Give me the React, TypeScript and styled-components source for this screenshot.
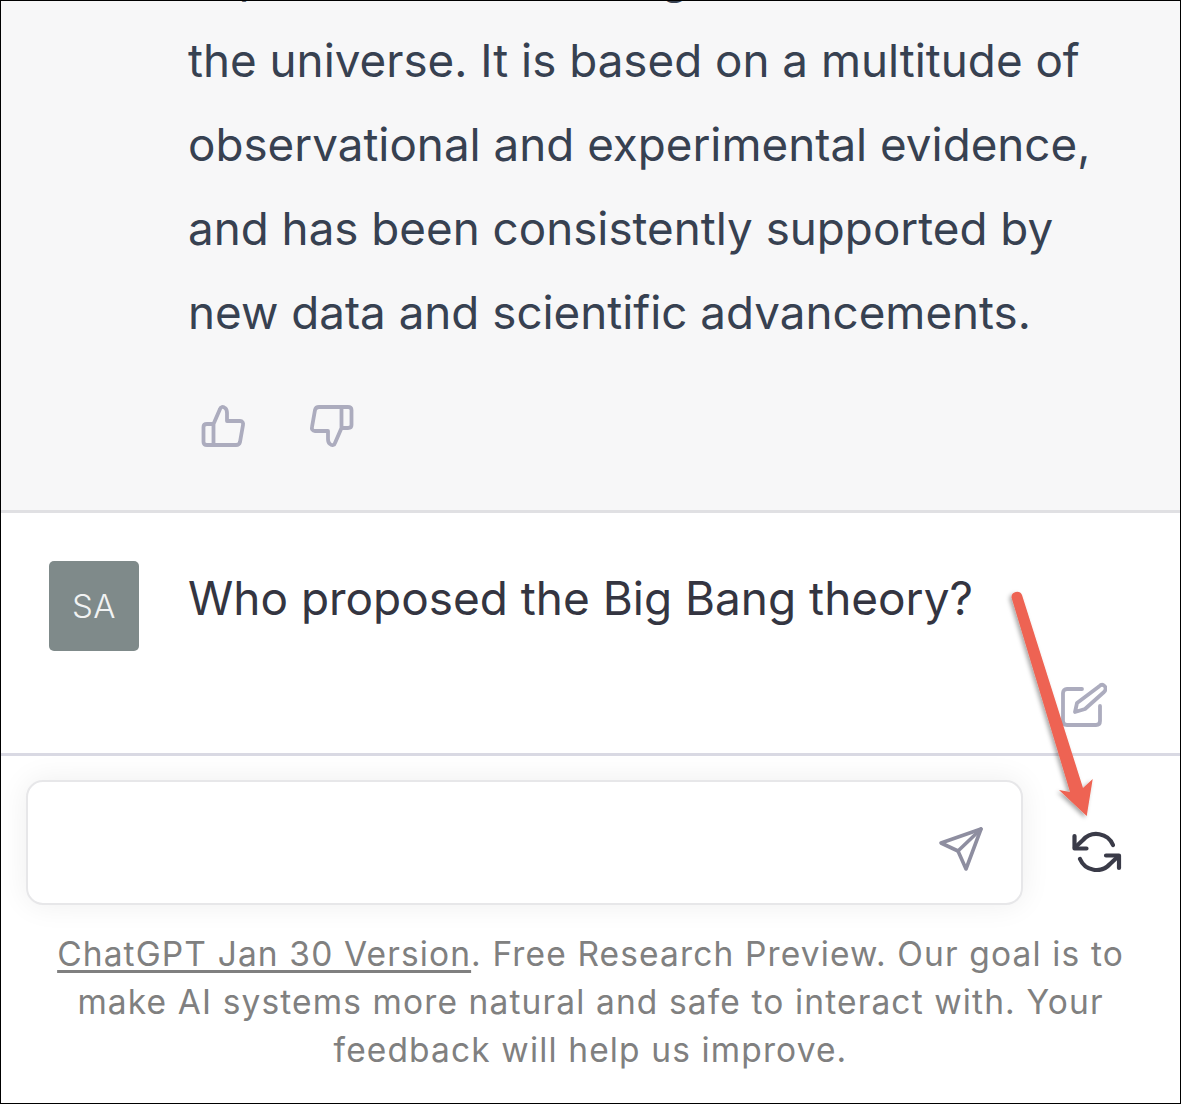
import React from "react";
import styled, { createGlobalStyle } from "styled-components";

const Global = createGlobalStyle`
  html, body { margin: 0; padding: 0; background: #fff; }
  body { font-family: Inter, "Liberation Sans", sans-serif; }
`;
const Frame = styled.div`
  position: relative;
  box-sizing: border-box;
  width: 1181px;
  height: 1104px;
  border: 1px solid #000;
  overflow: hidden;
  display: flex;
  flex-direction: column;
  background: #fff;
`;
const AnswerSection = styled.section`
  flex: none;
  box-sizing: border-box;
  height: 512px;
  background: #f7f7f8;
  border-bottom: 3px solid #e0e0e3;
  padding-left: 187px;
  overflow: hidden;
`;
const AnswerText = styled.p`
  margin: -66px 0 0;
  width: 960px;
  font-size: 45.75px;
  line-height: 84px;
  color: #374151;
`;
const Line = styled.span`
  display: block;
  white-space: nowrap;
`;
const Feedback = styled.div`
  display: flex;
  gap: 59px;
  margin: 47px 0 0 12px;
  color: #acacbe;
`;
const Question = styled.section`
  flex: none;
  box-sizing: border-box;
  height: 243px;
  border-bottom: 3px solid #d9d9e3;
  padding: 48px 0 0 48px;
  display: flex;
  align-items: flex-start;
  gap: 49px;
  position: relative;
`;
const Avatar = styled.div`
  width: 90px;
  height: 90px;
  border-radius: 5px;
  background: #7f8a8a;
  color: #f1f3f3;
  font-size: 33px;
  font-weight: 300;
  letter-spacing: 0.5px;
  display: flex;
  align-items: center;
  justify-content: center;
`;
const QuestionText = styled.div`
  font-size: 45.95px;
  line-height: 74px;
  color: #343541;
  white-space: nowrap;
`;
const EditButton = styled.div`
  margin-left: auto;
  margin-right: 73px;
  margin-top: 121px;
  color: #acacbe;
  display: flex;
`;
const Composer = styled.div`
  display: flex;
  align-items: center;
  padding: 24px 0 0 25px;
`;
const InputBox = styled.div`
  box-sizing: border-box;
  width: 997px;
  height: 125px;
  background: #fff;
  border: 2px solid #e7e7e9;
  border-radius: 17px;
  box-shadow: 0 0 30px rgba(0, 0, 0, 0.07);
  display: flex;
  align-items: center;
  justify-content: flex-end;
  padding: 13px 37px 0 0;
  color: #8e8ea0;
`;
const Regenerate = styled.div`
  margin-left: 49px;
  margin-top: 17px;
  color: #3a3b48;
  display: flex;
`;
const Footer = styled.p`
  margin: 25px 0 0;
  padding: 0 40px;
  text-align: center;
  font-size: 33.5px;
  line-height: 48px;
  letter-spacing: 1.13px;
  color: #808080;
`;
const Underlined = styled.span`
  text-decoration: underline;
  text-decoration-thickness: 3px;
  text-underline-offset: 4px;
`;
const ArrowLayer = styled.svg`
  position: absolute;
  left: -1px;
  top: -1px;
  pointer-events: none;
`;

const thumb =
  "M13.5 22 L20 7 C20.5 5 23 4 25 6 C26.5 7 27 8.5 27 11 L27 19 L40 19 C42.5 19 43.5 21 43 23 L40 40 C39.5 42 38.5 43 36 43 L7 43 C4.5 43 3.5 42 3.5 40 L3.5 25 C3.5 23 5 22 7 22 L13.5 22 L13.5 43";

export default function App() {
  return (
    <Frame>
      <Global />
      <AnswerSection>
        <AnswerText>
          <Line>explanation for the origin and evolution of</Line>
          <Line>the universe. It is based on a multitude of</Line>
          <Line>observational and experimental evidence,</Line>
          <Line>and has been consistently supported by</Line>
          <Line>new data and scientific advancements.</Line>
        </AnswerText>
        <Feedback>
          <svg width="48" height="48" viewBox="0 0 48 48" fill="none" stroke="currentColor" strokeWidth="3.8" strokeLinecap="round" strokeLinejoin="round">
            <path d={thumb} />
          </svg>
          <svg width="48" height="48" viewBox="0 0 48 48" fill="none" stroke="currentColor" strokeWidth="3.8" strokeLinecap="round" strokeLinejoin="round">
            <path d={thumb} transform="rotate(180 24 24)" />
          </svg>
        </Feedback>
      </AnswerSection>
      <Question>
        <Avatar>SA</Avatar>
        <QuestionText>Who proposed the Big Bang theory?</QuestionText>
        <EditButton>
          <svg width="46" height="46" viewBox="0 0 46 46" fill="none" stroke="currentColor" strokeWidth="3.8" strokeLinecap="round" strokeLinejoin="round">
            <path d="M21 7 L6 7 C3.5 7 2 8.5 2 11 L2 39 C2 41.5 3.5 43 6 43 L35 43 C37.5 43 39 41.5 39 39 L39 24" />
            <path d="M38 4.5 C40 2.5 42 2.5 43.5 4 C45 5.5 45 8 43 10 L24 27 L14 30 L16 21 Z" />
          </svg>
        </EditButton>
      </Question>
      <Composer>
        <InputBox>
          <svg width="46" height="46" viewBox="0 0 46 46" fill="none" stroke="currentColor" strokeWidth="3.6" strokeLinecap="round" strokeLinejoin="round">
            <path d="M43 3 L3 17 L20 25 L28 43 Z" />
            <path d="M43 3 L20 25" />
          </svg>
        </InputBox>
        <Regenerate>
          <svg width="50" height="42" viewBox="0 0 50 42" fill="none" stroke="currentColor" strokeWidth="4.2" strokeLinecap="round" strokeLinejoin="round">
            <path d="M2.5 6 L2.5 18.5 L14.5 18.5" />
            <path d="M41 15 A18 18 0 0 0 11 10 L3 17.5" />
            <path d="M47 38 L47 25.5 L34 25.5" />
            <path d="M8 29 A18 18 0 0 0 38 34 L46 26.5" />
          </svg>
        </Regenerate>
      </Composer>
      <Footer>
        <Underlined>ChatGPT Jan 30 Version</Underlined>. Free Research Preview. Our goal is to make AI systems more natural and safe to interact with. Your feedback will help us improve.
      </Footer>
      <ArrowLayer width="1181" height="1104" viewBox="0 0 1181 1104">
        <defs>
          <filter id="arrowShadow" x="-30%" y="-10%" width="160%" height="120%">
            <feDropShadow dx="-2" dy="2" stdDeviation="2" floodColor="#000" floodOpacity="0.35" />
          </filter>
        </defs>
        <path
          filter="url(#arrowShadow)"
          fill="#ee6352"
          d="M1011.5 597.5 A5.5 5.5 0 0 1 1022 595 L1083 788 L1092.7 779 L1086.7 816 L1059 790 L1070 792 Z"
        />
      </ArrowLayer>
    </Frame>
  );
}
